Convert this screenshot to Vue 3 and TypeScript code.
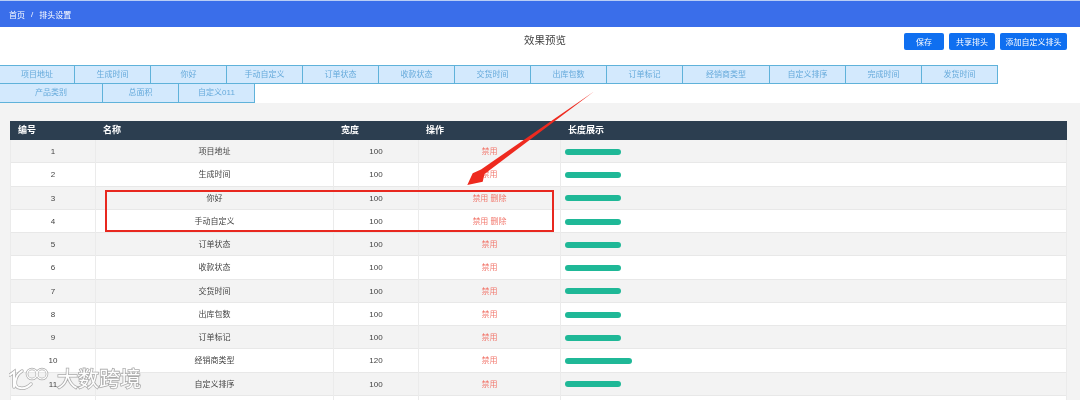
<template>
  <div class="page">
    <nav class="topbar">
      <span>首页</span>
      <span class="sep">/</span>
      <span>排头设置</span>
    </nav>

    <section class="panel">
      <header class="panel-head">
        <h2>效果预览</h2>
        <div class="actions">
          <button type="button" class="save">保存</button>
          <button type="button" class="share">共享排头</button>
          <button type="button" class="add">添加自定义排头</button>
        </div>
      </header>

      <div class="preview">
        <div
          v-for="tab in tabs"
          :key="tab.label"
          class="tab"
          :style="{ width: tab.width + 'px' }"
        >
          {{ tab.label }}
        </div>
      </div>
    </section>

    <main class="content">
      <div class="grid">
        <div class="row head">
          <div>编号</div>
          <div>名称</div>
          <div>宽度</div>
          <div>操作</div>
          <div>长度展示</div>
        </div>
        <div v-for="row in rows" :key="row.id" class="row body">
          <div>{{ row.id }}</div>
          <div>{{ row.name }}</div>
          <div>{{ row.width }}</div>
          <div class="ops">
            <span>禁用</span>
            <span v-if="row.custom">&nbsp;删除</span>
          </div>
          <div class="bar-cell">
            <div class="bar" :style="{ width: row.width * 0.56 + 'px' }" />
          </div>
        </div>
        <!-- next row starts just above the fold, only its cell lines show -->
        <div class="row body">
          <div /><div /><div /><div /><div />
        </div>
      </div>
    </main>

    <div class="highlight" />
    <svg class="arrow" viewBox="0 0 140 105" aria-hidden="true">
      <path d="M133 .5 L20 78.5 L11.7 82.3 L6.3 94 L21.7 90.7 L23.5 83 Z" fill="#ee2a1f" />
    </svg>

    <div class="watermark">
      <svg viewBox="0 0 46 26" aria-hidden="true">
        <g fill="none" stroke="#a3a3a3" stroke-width="3.4" stroke-linecap="round">
          <path d="M1 9 L5 6 V21" />
          <path d="M13 5 C5 10 4 22 11 22 C15 23 19 21 22 18" />
          <circle cx="23" cy="8" r="5" stroke-width="2.6" />
          <circle cx="33" cy="8" r="5" stroke-width="2.6" />
        </g>
        <g fill="none" stroke="#fff" stroke-width="2" stroke-linecap="round">
          <path d="M1 9 L5 6 V21" />
          <path d="M13 5 C5 10 4 22 11 22 C15 23 19 21 22 18" />
          <circle cx="23" cy="8" r="5" stroke-width="1.2" />
          <circle cx="33" cy="8" r="5" stroke-width="1.2" />
        </g>
      </svg>
      <span>大数跨境</span>
    </div>
  </div>
</template>

<script setup lang="ts">
const tabs = [
  { label: '项目地址', width: 75 },
  { label: '生成时间', width: 76 },
  { label: '你好', width: 76 },
  { label: '手动自定义', width: 76 },
  { label: '订单状态', width: 76 },
  { label: '收款状态', width: 76 },
  { label: '交货时间', width: 76 },
  { label: '出库包数', width: 76 },
  { label: '订单标记', width: 76 },
  { label: '经销商类型', width: 87 },
  { label: '自定义排序', width: 76 },
  { label: '完成时间', width: 76 },
  { label: '发货时间', width: 76 },
  { label: '产品类别', width: 103 },
  { label: '总面积', width: 76 },
  { label: '自定义011', width: 76 },
]

const names = [
  '项目地址', '生成时间', '你好', '手动自定义', '订单状态', '收款状态',
  '交货时间', '出库包数', '订单标记', '经销商类型', '自定义排序',
]

const rows = names.map((name, i) => ({
  id: i + 1,
  name,
  width: name === '经销商类型' ? 120 : 100,
  custom: name === '你好' || name === '手动自定义',
}))
</script>

<style>
html,
body {
  margin: 0;
  overflow: hidden;
  background: #f3f3f3;
}
</style>

<style scoped>
.page {
  position: relative;
  width: 1080px;
  height: 400px;
  overflow: hidden;
  font-family: "Liberation Sans", "Noto Sans CJK SC", sans-serif;
  color: #444;
  background: #f3f3f3;
  filter: blur(0.3px);
}

.topbar {
  display: flex;
  align-items: center;
  gap: 6px;
  height: 27px;
  padding: 1px 0 0 9px;
  background: #3a6eea;
  border-top: 1px solid #b9cdf5;
  box-sizing: border-box;
  color: #fff;
  font-size: 8px;
}

.panel {
  height: 76px;
  background: #fff;
}

.panel-head {
  position: relative;
  display: flex;
  justify-content: flex-end;
  height: 38px;
  padding: 6px 13px 0 0;
  box-sizing: border-box;
}

.panel-head h2 {
  position: absolute;
  top: 6px;
  left: 524px;
  margin: 0;
  color: #444;
  font-size: 10.5px;
  font-weight: 400;
  line-height: 14px;
}

.actions {
  display: flex;
  gap: 5px;
}

.actions button {
  height: 17px;
  padding: 0;
  border: 0;
  border-radius: 2px;
  background: #0f6ff0;
  color: #fff;
  font-family: inherit;
  font-size: 8px;
}

.save { width: 40px; }
.share { width: 46px; }
.add { width: 67px; }

.preview {
  display: flex;
  flex-wrap: wrap;
  width: 1000px;
}

.tab {
  box-sizing: border-box;
  height: 19.3px;
  border: 1px solid #5fb2da;
  border-left: 0;
  background: #d3e9fd;
  color: #66aadb;
  font-size: 8px;
  line-height: 17.3px;
  text-align: center;
}

.tab:nth-child(n + 14) {
  height: 19px;
  border-top: 0;
}

.content {
  padding: 18px 13px 0 10px;
}

.grid {
  font-size: 8px;
}

.row {
  display: grid;
  grid-template-columns: 85px 238px 85px 142px 1fr;
}

.head {
  height: 19px;
  background: #2c3e50;
  color: #fff;
  font-size: 9px;
  font-weight: 700;
  line-height: 19px;
}

.head > div {
  padding-left: 8px;
}

.body {
  box-sizing: border-box;
  height: 23.25px;
  border-bottom: 1px solid #e8e8e8;
  background: #fff;
  line-height: 23.5px;
  text-align: center;
}

.body:nth-child(even) {
  background: #f3f3f3;
}

.body > div {
  border-left: 1px solid #ebebeb;
}

.body > div:last-child {
  border-right: 1px solid #ebebeb;
}

.ops {
  color: #f2796e;
}

.bar-cell {
  display: flex;
  align-items: center;
  padding-left: 4px;
}

.bar {
  height: 6px;
  border-radius: 3px;
  background: #1fb897;
}

.highlight {
  position: absolute;
  top: 190px;
  left: 105px;
  width: 449px;
  height: 42px;
  box-sizing: border-box;
  border: 2px solid #e8281f;
}

.arrow {
  position: absolute;
  top: 91px;
  left: 461px;
  width: 140px;
  height: 105px;
}

.watermark {
  position: absolute;
  top: 365px;
  left: 9px;
  display: flex;
  align-items: center;
  gap: 2px;
  color: #fff;
  font-size: 21px;
  line-height: 28px;
  opacity: 0.9;
  -webkit-text-stroke: 1.6px #a3a3a3;
  paint-order: stroke fill;
}

.watermark svg {
  width: 46px;
  height: 26px;
}
</style>
